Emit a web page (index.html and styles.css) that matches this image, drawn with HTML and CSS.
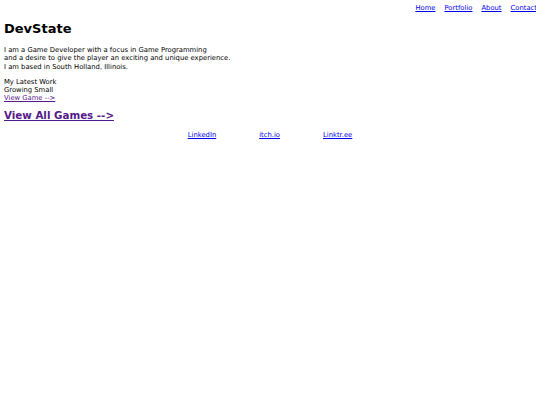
FILE: index.html
```
<!DOCTYPE html>
<html lang="en">
<head>
    <meta charset="UTF-8">
    <meta name="viewport" content="width=device-width, initial-scale=1.0">
    <link rel="stylesheet" href="styles.css">
    <title>DevState</title>
</head>
<body>
    <div class="top">
        <nav class="nav">
            <a href="#">Home</a>
            <a href="#">Portfolio</a>
            <a href="#">About</a>
            <a href="#">Contact</a>
        </nav>
    </div>

    <div class="main">
        <h1 class="title">DevState</h1>
        <p class="about">
            I am a Game Developer with a focus in Game Programming<br>
            and a desire to give the player an exciting and unique experience.<br>
            I am based in South Holland, Illinois.
        </p>
        <p class="latest">
            My Latest Work<br>
            Growing Small<br>
            <a class="visited" href="#">View Game --&gt;</a>
        </p>
        <h2 class="all-games"><a class="visited" href="#">View All Games --&gt;</a></h2>
    </div>

    <div class="bottom">
        <a href="#">LinkedIn</a>
        <a href="#">itch.io</a>
        <a href="#">Linktr.ee</a>
    </div>
</body>
</html>
```

FILE: styles.css
```
body {
    margin: 4px;
    font-family: "DejaVu Sans", Verdana, sans-serif;
    font-size: 6.8px;
    line-height: 8.2px;
    color: black;
}

a {
    color: #0000ee;
}

a.visited {
    color: #551a8b;
}

/* header */
.nav {
    display: flex;
    justify-content: flex-end;
    gap: 9px;
    margin-right: -1px;
}

/* main */
.title {
    font-size: 13px;
    line-height: normal;
    margin: 9px 0 10px 0;
}

.about {
    margin: 0 0 7px 0;
}

.latest {
    margin: 0;
}

.all-games {
    font-size: 10.3px;
    line-height: normal;
    margin: 7px 0 10px 0;
}

/* footer */
.bottom {
    display: flex;
    justify-content: center;
    gap: 43px;
}
```
